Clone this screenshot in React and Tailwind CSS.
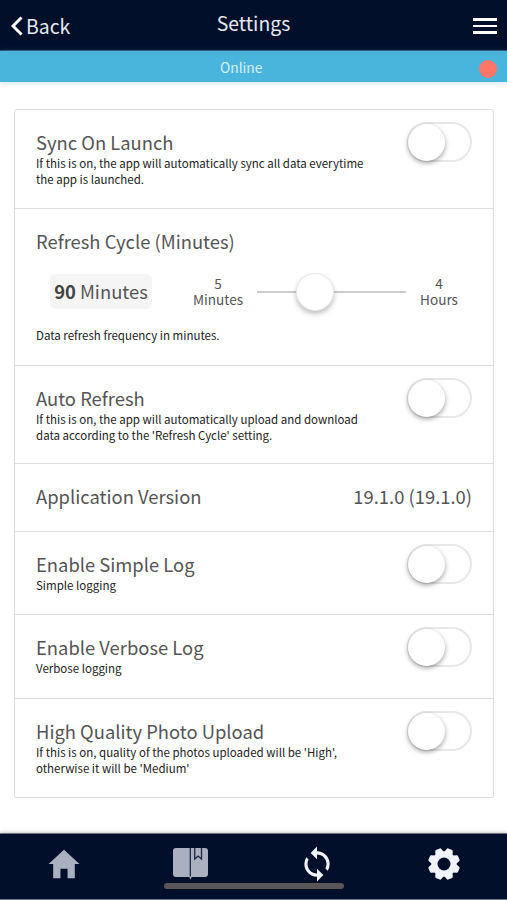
import React, { useState } from "react";
import { IoMdHome } from "react-icons/io";
import { MdSync } from "react-icons/md";

const Toggle = ({ on, onChange }) => (
  <button
    role="switch"
    aria-checked={on}
    onClick={onChange}
    className={`mt-3 flex h-10 w-[65px] shrink-0 items-center rounded-full border-2 border-[#e8e8e8] ${on ? "justify-end bg-green-400" : "bg-white"}`}
  >
    <span className="-ml-px h-[37px] w-[37px] rounded-full bg-white shadow-[0_2px_5px_rgba(0,0,0,0.38)]" />
  </button>
);

const SettingRow = ({ title, text, height, on, onChange }) => (
  <div className={`flex justify-between border-b border-[#dedede] pl-[21px] pr-[21px] ${height}`}>
    <div className="w-[345px] pt-[21px]">
      <h2 className="text-[18.4px] leading-[22px] text-[#555]">{title}</h2>
      <p className="mt-[3px] whitespace-pre-line text-[11.5px] leading-[15.5px] text-[#222]">{text}</p>
    </div>
    <Toggle on={on} onChange={onChange} />
  </div>
);

const BookIcon = () => (
  <svg width="35" height="32" viewBox="0 0 35 32">
    <rect x="0" y="0" width="35" height="29" rx="3" fill="#a9b0c0" />
    <path d="M17.3 0V29" stroke="#1c2947" strokeWidth="1.3" />
    <path d="M16 28.5h3l-1.5 3z" fill="#a9b0c0" />
    <path d="M21.7 0V11l3.4-3 3.4 3V0" fill="none" stroke="#1c2947" strokeWidth="1.3" />
  </svg>
);

const GearIcon = () => (
  <svg width="32" height="32" viewBox="-16 -16 32 32" fill="#f0f4f8">
    <circle r="9.6" fill="none" stroke="#f0f4f8" strokeWidth="6.2" />
    {[22.5, 67.5, 112.5, 157.5, 202.5, 247.5, 292.5, 337.5].map((angle) => (
      <path key={angle} transform={`rotate(${angle})`} d="M-4.4-11.5L-3.3-15Q-3-16-2-16H2Q3-16 3.3-15L4.4-11.5z" />
    ))}
  </svg>
);

const App = () => {
  const [settings, setSettings] = useState({ sync: false, auto: false, simple: false, verbose: false, photo: false });

  const toggle = (key) => setSettings({ ...settings, [key]: !settings[key] });

  return (
    <div className="flex h-[900px] w-[507px] flex-col overflow-hidden bg-white font-['Noto_Sans_CJK_SC',sans-serif]">
      <header className="grid h-[51px] shrink-0 grid-cols-3 items-center border-b border-[#31506d] bg-[#020f2b] text-[#e4e9f2]">
        <button className="flex items-center gap-[3px] pl-[11px] pt-[2px] text-[19.4px] leading-6">
          <svg width="12" height="20" viewBox="0 0 12 20" fill="none" stroke="white" strokeWidth="3">
            <path d="M10.5 1.5L2 10l8.5 8.5" />
          </svg>
          Back
        </button>
        <h1 className="-mt-[4px] text-center text-[19.4px] leading-6">Settings</h1>
        <button className="ml-auto mr-[10px] mt-[2px] flex w-6 flex-col gap-[4px]">
          <span className="h-[2.5px] bg-white" />
          <span className="h-[2.5px] bg-white" />
          <span className="h-[2.5px] bg-white" />
        </button>
      </header>

      <div className="flex h-[31px] shrink-0 items-center justify-between bg-[#49b4dc] pl-[220px] pr-[10px] shadow-[0_1px_6px_rgba(73,180,220,0.3)]">
        <span className="text-[13.8px] leading-5 text-[#d9f1fa]">Online</span>
        <span className="mt-[4px] h-[18px] w-[18px] rounded-full bg-[#ff7666]" />
      </div>

      <main className="flex-1 pl-[14px] pr-[13px] pt-[27px]">
        <div className="rounded-[3px] border border-b-0 border-[#dedede]">
          <SettingRow
            title="Sync On Launch"
            text={"If this is on, the app will automatically sync all data everytime\nthe app is launched."}
            height="h-[99px]"
            on={settings.sync}
            onChange={() => toggle("sync")}
          />
          <div className="h-[157px] border-b border-[#dedede] pl-[21px] pt-[21px]">
            <h2 className="text-[18.4px] leading-[22px] text-[#555]">Refresh Cycle (Minutes)</h2>
            <div className="mt-[21px] flex h-[37px] items-center text-[#555]">
              <div className="ml-[14px] flex h-[35px] w-[102px] items-center justify-center gap-[4px] rounded-md bg-[#f5f5f5] text-[18.4px]">
                <b className="text-[#444]">90</b> Minutes
              </div>
              <div className="ml-[35px] w-[62px] text-center text-[13.6px] leading-[15.5px]">5<br />Minutes</div>
              <div className="ml-[8px] flex h-[2px] w-[149px] items-center bg-[#ccc]">
                <span className="ml-[39px] h-[38px] w-[38px] rounded-full border border-[#e8e8e8] bg-white shadow-[0_3px_5px_rgba(0,0,0,0.25)]" />
              </div>
              <div className="ml-[2px] w-[62px] text-center text-[13.6px] leading-[15.5px]">4<br />Hours</div>
            </div>
            <p className="mt-[18px] text-[11.5px] leading-[15.5px] text-[#222]">Data refresh frequency in minutes.</p>
          </div>
          <SettingRow
            title="Auto Refresh"
            text={"If this is on, the app will automatically upload and download\ndata according to the 'Refresh Cycle' setting."}
            height="h-[98px]"
            on={settings.auto}
            onChange={() => toggle("auto")}
          />
          <div className="flex h-[68px] items-center justify-between border-b border-[#dedede] px-[21px] pb-[2px] text-[18.4px] text-[#555]">
            <h2>Application Version</h2>
            <span>19.1.0 (19.1.0)</span>
          </div>
          <SettingRow title="Enable Simple Log" text="Simple logging" height="h-[83px]" on={settings.simple} onChange={() => toggle("simple")} />
          <SettingRow title="Enable Verbose Log" text="Verbose logging" height="h-[84px]" on={settings.verbose} onChange={() => toggle("verbose")} />
          <SettingRow
            title="High Quality Photo Upload"
            text={"If this is on, quality of the photos uploaded will be 'High',\notherwise it will be 'Medium'"}
            height="h-[99px]"
            on={settings.photo}
            onChange={() => toggle("photo")}
          />
        </div>
      </main>

      <footer className="relative grid h-[67px] shrink-0 grid-cols-4 border-y border-[#6d7486] bg-[#020f2b] shadow-[0_-1px_3px_rgba(0,0,0,0.2)]">
        <button className="flex justify-center pl-[2px] pt-[11px] text-[#a9b0c0]"><IoMdHome size={38} /></button>
        <button className="flex justify-center pt-[14px]"><BookIcon /></button>
        <button className="flex justify-center pt-[11px] text-[#f0f4f8]"><MdSync size={38} /></button>
        <button className="flex justify-center pt-[14px]"><GearIcon /></button>
        <div className="absolute left-[164px] top-[49px] h-[6px] w-[180px] rounded-full bg-[#5a5658]" />
      </footer>
    </div>
  );
};

export default App;
